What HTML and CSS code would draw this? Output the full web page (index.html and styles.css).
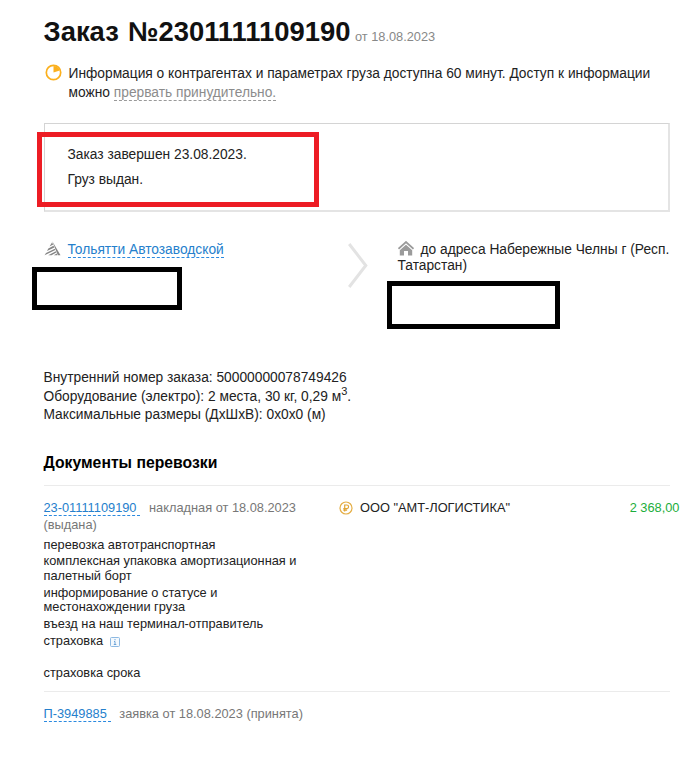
FILE: index.html
```html
<!DOCTYPE html>
<html lang="ru">
<head>
<meta charset="utf-8">
<title>Заказ №2301111109190</title>
<link rel="stylesheet" href="styles.css">
</head>
<body>
<main class="order">
  <header class="order-header">
    <h1 class="order-title">Заказ №2301111109190</h1>
    <span class="order-date">от 18.08.2023</span>
  </header>

  <section class="notice">
    <svg class="notice-icon" width="17" height="17" viewBox="0 0 17 17">
      <circle cx="8.5" cy="8.5" r="7.2" fill="none" stroke="#fbb01e" stroke-width="1.7"/>
      <path d="M8.5 2v6.5l6.2-2A6.5 6.5 0 0 0 8.5 2z" fill="#fbb01e"/>
    </svg>
    <p class="notice-text">Информация о контрагентах и параметрах груза доступна 60 минут. Доступ к информации<br>можно <a class="revoke">прервать принудительно.</a></p>
  </section>

  <section class="status">
    <p>Заказ завершен 23.08.2023.</p>
    <p>Груз выдан.</p>
    <div class="status-mark"></div>
  </section>

  <section class="route">
    <div class="route-from">
      <div class="place">
        <svg class="place-icon" width="17" height="15" viewBox="0 0 17 15">
          <path d="M8.3 0.3L16.5 14.3H13.8z" fill="#858585"/>
          <path d="M8 1.5L5.5 5.6 9.200 3.500M9.500 4.800L4.300 7.600 3 9.900 10.300 6.500M10.800 7.800L2 11.900 0.600 14.300 11.300 9.100M11.800 10.300L4.200 14.300H7.500L12.300 11.600M12.800 12.600L9.800 14.300H13.200z" fill="#858585"/>
        </svg>
        <a class="link">Тольятти Автозаводской</a>
      </div>
      <div class="redacted redacted-from"></div>
    </div>
    <svg class="chevron" width="21" height="46" viewBox="0 0 21 46">
      <path d="M1.2 1L17.8 22.5 1.2 44" fill="none" stroke="#e3e3e3" stroke-width="3"/>
    </svg>
    <div class="route-to">
      <div class="place">
        <svg class="place-icon" width="16" height="15" viewBox="0 0 16 15">
          <path d="M0.5 7.8L8 1l7.5 6.8" fill="none" stroke="#9b9b9b" stroke-width="1.7"/>
          <path d="M1.8 9.3L8 3.8l6.2 5.5V14.5H10V10H6v4.5H1.8z" fill="#9b9b9b"/>
        </svg>
        <span>до адреса Набережные Челны г (Респ.</span>
      </div>
      <div class="place-rest">Татарстан)</div>
      <div class="redacted redacted-to"></div>
    </div>
  </section>

  <section class="params">
    <p>Внутренний номер заказа: 50000000078749426</p>
    <p>Оборудование (электро): 2 места, 30 кг, 0,29 м<sup>3</sup>.</p>
    <p>Максимальные размеры (ДхШхВ): 0x0x0 (м)</p>
  </section>

  <h2 class="docs-title">Документы перевозки</h2>
  <section class="doc">
    <div class="doc-info">
      <p class="doc-head"><a class="link doc-link">23-01111109190</a>накладная от 18.08.2023<br>(выдана)</p>
      <ul class="services">
        <li>перевозка автотранспортная</li>
        <li>комплексная упаковка амортизационная и<br>палетный борт</li>
        <li>информирование о статусе и<br>местонахождении груза</li>
        <li>въезд на наш терминал-отправитель</li>
        <li class="insurance">страховка
          <svg class="info-icon" width="10" height="10" viewBox="0 0 10 10">
            <rect x="0.5" y="0.5" width="9" height="9" rx="1" fill="#f4f9fd" stroke="#8db9e2"/>
            <path d="M5 2v1.3M4 4.5h1v3M3.8 7.5h2.5" fill="none" stroke="#6ca3d8"/>
          </svg>
        </li>
        <li>страховка срока</li>
      </ul>
    </div>
    <div class="payer">
      <svg width="14" height="14" viewBox="0 0 14 14">
        <circle cx="7" cy="7" r="6" fill="none" stroke="#e5ae45" stroke-width="1.2"/>
        <path d="M5.7 10.5V4h2.1a1.7 1.7 0 0 1 0 3.6H4.3M4.3 9.2h3.8" fill="none" stroke="#e0a535" stroke-width="1.2"/>
      </svg>
      <span>ООО "АМТ-ЛОГИСТИКА"</span>
    </div>
    <div class="price">2 368,00</div>
  </section>
  <section class="doc doc-request">
    <p class="doc-head"><a class="link doc-link">П-3949885</a>заявка от 18.08.2023 (принята)</p>
  </section>
</main>
</body>
</html>
```
FILE: styles.css
```css
* {
  box-sizing: border-box;
}

body {
  margin: 0;
  background: #fff;
  color: #222;
  font-family: "Liberation Sans", Arial, sans-serif;
  font-size: 13.78px;
}

h1, h2, p, ul {
  margin: 0;
  padding: 0;
}

svg {
  display: block;
  flex: none;
}

.order {
  width: 626px;
  margin-left: 43.5px;
  padding-top: 15px;
}

.order-header {
  display: flex;
  align-items: baseline;
  gap: 4.5px;
  height: 48px;
  white-space: nowrap;
}

.order-title {
  color: #111;
  font-size: 27.4px;
  line-height: 33px;
  word-spacing: 1.5px;
}

.order-date {
  color: #888;
  font-size: 12.8px;
}

.notice {
  display: flex;
  gap: 7px;
  height: 60px;
  padding-left: 1px;
}

.notice-icon {
  margin-top: 1px;
}

.notice-text {
  padding-top: 0.5px;
  line-height: 19.8px;
  white-space: nowrap;
}

.revoke {
  border-bottom: 1px dashed #999;
  color: #8c8c8c;
}

.status {
  position: relative;
  height: 89px;
  padding: 19px 0 0 23px;
  border: 1px solid #d4d4d4;
  border-right: 2px solid #e4e4e4;
  border-bottom: 2px solid #e4e4e4;
  line-height: 24.6px;
}

.status-mark {
  position: absolute;
  top: 8px;
  left: -8px;
  width: 282px;
  height: 75px;
  border: 5px solid #ed1c24;
}

.route {
  display: flex;
  height: 127px;
  padding-top: 30px;
  line-height: 16px;
  white-space: nowrap;
}

.route-from {
  width: 304px;
}

.place {
  display: flex;
  gap: 7px;
}

.place-icon {
  margin-top: -1px;
}

.link {
  border-bottom: 1px dashed #2b8ae0;
  color: #2580cc;
}

.place .link {
  height: 16px;
}

.redacted {
  border: 5px solid #000;
}

.redacted-from {
  width: 150px;
  height: 43px;
  margin: 9px 0 0 -12px;
}

.chevron {
  margin-top: 1px;
}

.route-to {
  margin-left: 29px;
}

.redacted-to {
  width: 173px;
  height: 48px;
  margin: 7px 0 0 -11px;
}

.params {
  height: 86px;
  margin-top: 29px;
  padding-top: 1px;
  line-height: 18.7px;
}

.params sup {
  font-size: 11px;
  line-height: 0;
}

.docs-title {
  height: 31px;
  color: #000;
  font-size: 15.75px;
  line-height: 18px;
}

.doc {
  display: grid;
  grid-template-columns: 295px 1fr auto;
  height: 205.5px;
  margin-right: -10px;
  padding: 15px 0 0;
  background: linear-gradient(#ebebeb, #ebebeb) 0 0 / 626px 1px no-repeat;
  font-size: 12.8px;
  line-height: 16.5px;
  white-space: nowrap;
}

.doc-request {
  height: auto;
}

.doc-head {
  color: #777;
}

.doc-link {
  margin-right: 8.5px;
  padding-right: 4px;
}

.services {
  margin-top: 4.5px;
  color: #222;
  line-height: 14.7px;
  list-style: none;
}

.services li {
  margin-bottom: 2px;
}

.services .insurance {
  display: flex;
  align-items: center;
  gap: 7px;
  margin-bottom: 17.5px;
}

.info-icon {
  margin-top: 2px;
}

.payer {
  display: flex;
  gap: 7.5px;
}

.payer svg {
  margin-top: 1px;
}

.price {
  color: #1cae3c;
}
```
